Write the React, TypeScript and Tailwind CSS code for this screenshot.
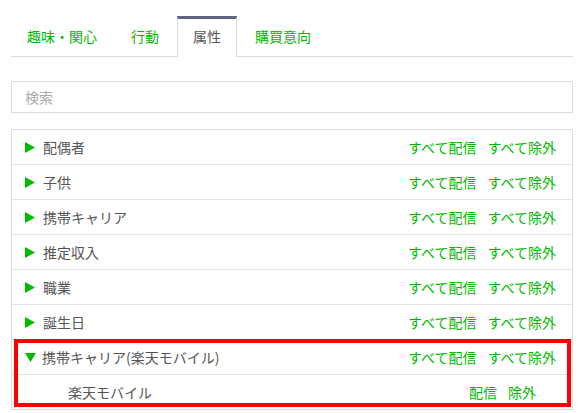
import { useState } from "react";

const tabs = ["趣味・関心", "行動", "属性", "購買意向"];

const rows = ["配偶者", "子供", "携帯キャリア", "推定収入", "職業", "誕生日"];

function Triangle({ open }: { open?: boolean }) {
  if (open) {
    return (
      <svg width="11" height="10" viewBox="0 0 11 10" className="shrink-0">
        <polygon points="0,1 11,1 5.5,10" fill="#00b900" />
      </svg>
    );
  }
  return (
    <svg width="10" height="11" viewBox="0 0 10 11" className="shrink-0">
      <polygon points="0,0 10,5.5 0,11" fill="#00b900" />
    </svg>
  );
}

function Actions({ all = true }: { all?: boolean }) {
  return (
    <div className="flex items-center gap-[11px] text-[14px] text-[#00b900]">
      <span>{all ? "すべて配信" : "配信"}</span>
      <span>{all ? "すべて除外" : "除外"}</span>
    </div>
  );
}

export default function App() {
  const [active] = useState(2);

  return (
    <div
      className="h-[413px] w-[584px] bg-white px-[11px] pt-[16px] text-[#555]"
      style={{ fontFamily: '"Noto Sans CJK JP", "Noto Sans", sans-serif' }}
    >
      <div className="flex h-[41px] border-b border-[#dcdcdc]">
        {tabs.map((t, i) =>
          i === active ? (
            <div
              key={t}
              className="-mb-px mr-[2px] flex items-center border-x border-t-[3px] border-x-[#dcdcdc] border-t-[#5f6580] bg-white px-[15px] pb-[3px] text-[14px] text-[#555]"
            >
              {t}
            </div>
          ) : (
            <div key={t} className="mr-[2px] flex items-center px-4 pt-[1px] text-[14px] text-[#00b900]">
              {t}
            </div>
          )
        )}
      </div>

      <div className="mt-[24px] flex h-[32px] items-center border border-[#dcdcdc] px-[13px] text-[14px] text-[#aaa]">
        検索
      </div>

      <div className="relative mt-[16px] border border-[#dcdcdc]">
        {rows.map((r) => (
          <div key={r} className="flex h-[35px] items-center justify-between border-b border-[#e3e3e3] pl-[13px] pr-[16px]">
            <div className="flex items-center gap-[8px] text-[14px]">
              <Triangle />
              <span>{r}</span>
            </div>
            <Actions />
          </div>
        ))}
        <div className="flex h-[35px] items-center justify-between border-b border-[#e3e3e3] pl-[13px] pr-[16px]">
          <div className="flex items-center gap-[6px] text-[14px]">
            <Triangle open />
            <span>携帯キャリア(楽天モバイル)</span>
          </div>
          <Actions />
        </div>
        <div className="flex h-[34px] items-center justify-between pl-[56px] pr-[36px]">
          <span className="text-[14px]">楽天モバイル</span>
          <Actions all={false} />
        </div>

        <div className="pointer-events-none absolute bottom-[2px] left-[2px] right-[1px] top-[209px] border-4 border-[#ff0000]" />
      </div>
    </div>
  );
}
